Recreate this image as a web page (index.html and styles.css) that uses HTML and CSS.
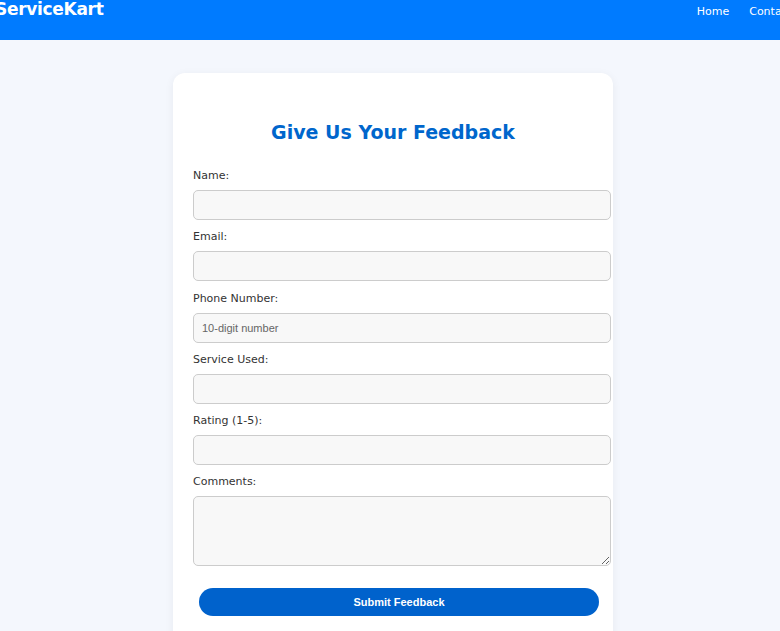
FILE: index.html
```html
<!DOCTYPE html>
<html lang="en">
<head>
<meta charset="utf-8">
<title>ServiceKart Feedback</title>
<link rel="stylesheet" href="styles.css">
</head>
<body>
<header class="topbar">
  <div class="logo">ServiceKart</div>
  <nav class="nav">
    <a href="#">Home</a>
    <a href="#">Contact</a>
  </nav>
</header>
<main class="page">
  <section class="card">
    <h1 class="title">Give Us Your Feedback</h1>
    <form class="form">
      <label class="label">Name:</label>
      <input class="field" type="text">
      <label class="label">Email:</label>
      <input class="field" type="email">
      <label class="label">Phone Number:</label>
      <input class="field" type="text" placeholder="10-digit number">
      <label class="label">Service Used:</label>
      <input class="field" type="text">
      <label class="label">Rating (1-5):</label>
      <input class="field" type="text">
      <label class="label">Comments:</label>
      <textarea class="field area"></textarea>
      <button class="submit" type="button">Submit Feedback</button>
    </form>
  </section>
</main>
</body>
</html>
```
FILE: styles.css
```css
html, body {
  margin: 0;
  padding: 0;
}
body {
  background: #f4f7fd;
  font-family: "DejaVu Sans", sans-serif;
  color: #333;
  overflow: hidden;
  height: 631px;
}
.topbar {
  background: #007bff;
  height: 40px;
  display: flex;
  justify-content: space-between;
  align-items: flex-start;
  white-space: nowrap;
  overflow: hidden;
}
.logo {
  color: #fff;
  font-weight: 700;
  font-size: 17px;
  margin-left: -5px;
  margin-top: -1px;
  letter-spacing: -0.3px;
}
.nav {
  display: flex;
  gap: 20px;
  margin-right: -12px;
  margin-top: 5px;
}
.nav a {
  color: #fff;
  text-decoration: none;
  font-size: 11px;
}
.page {
  display: flex;
  justify-content: center;
  padding-left: 6px;
  padding-top: 33px;
}
.card {
  width: 400px;
  background: #fff;
  border-radius: 12px;
  box-shadow: 0 2px 10px rgba(0, 0, 0, 0.06);
  padding: 40px 20px 40px;
}
.title {
  margin: 0 0 17px;
  text-align: center;
  color: #0066cc;
  font-size: 19px;
  font-weight: 700;
  line-height: 38px;
}
.form {
  display: flex;
  flex-direction: column;
}
.label {
  font-size: 11px;
  line-height: 15px;
  color: #333;
  margin-bottom: 7px;
}
.field {
  width: 400px;
  box-sizing: content-box;
  padding: 0 8px;
  height: 28px;
  border: 1px solid #ccc;
  border-radius: 5px;
  background: #f8f8f8;
  margin: 0 0 9.25px;
  font-family: "Liberation Sans", Arial, sans-serif;
  font-size: 11px;
  color: #333;
}
.field::placeholder {
  color: #666;
}
.area {
  height: 68px;
  resize: vertical;
  padding: 0 8px;
  margin-bottom: 22px;
}
.submit {
  width: 400px;
  height: 28px;
  margin-left: 6px;
  border: none;
  border-radius: 14px;
  background: #0062cc;
  color: #fff;
  font-family: "Liberation Sans", Arial, sans-serif;
  font-weight: 700;
  font-size: 11px;
}
```
